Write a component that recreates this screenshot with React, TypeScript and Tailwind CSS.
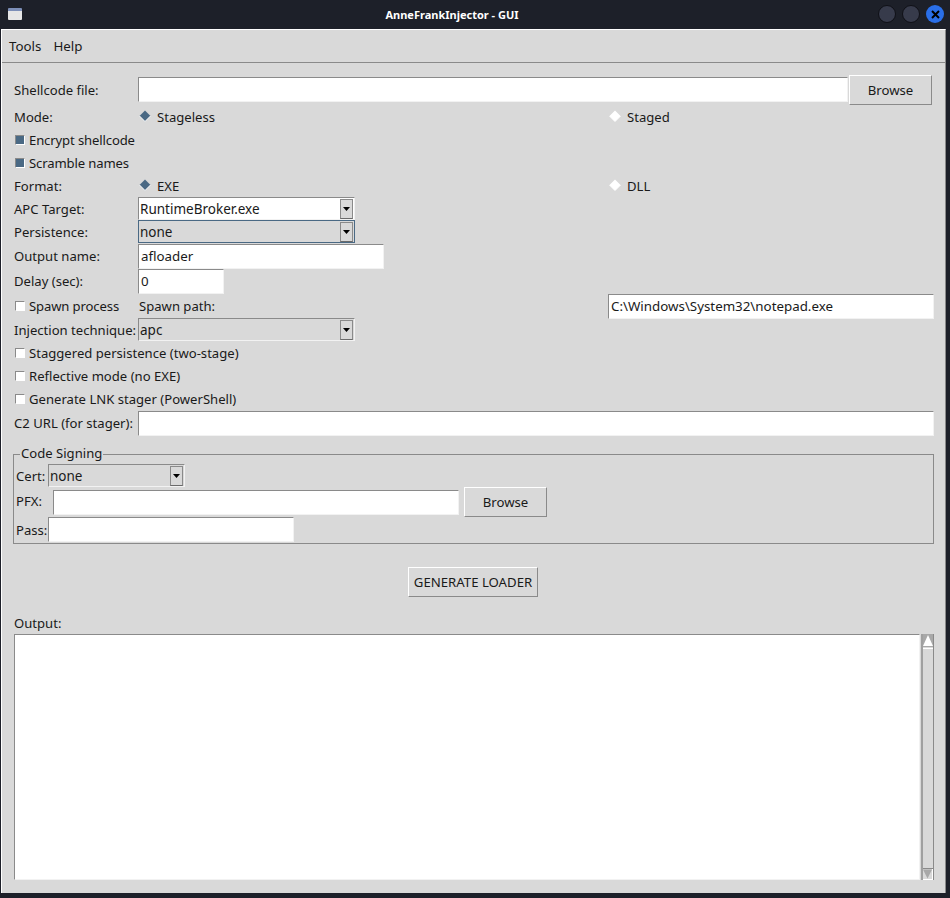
import type { ReactNode } from "react";

const sunken =
  "border-t border-l border-t-[#8a8a8a] border-l-[#8a8a8a] border-r border-b border-r-[#f2f2f2] border-b-[#f2f2f2]";
const raised =
  "border-t border-l border-t-white border-l-white border-r border-b border-r-[#8a8a8a] border-b-[#8a8a8a]";

const Entry = ({ value = "", className = "" }: { value?: string; className?: string }) => (
  <div className={`bg-white flex items-center pl-[2px] text-[13.33px] ${sunken} ${className}`}>
    {value}
  </div>
);

const Button = ({ label, className = "" }: { label: string; className?: string }) => (
  <div className={`flex items-center justify-center bg-[#d9d9d9] text-[13.2px] pt-[1px] ${raised} ${className}`}>
    {label}
  </div>
);

const Combo = ({
  value,
  readonly = false,
  focus = false,
  className = "",
}: {
  value: string;
  readonly?: boolean;
  focus?: boolean;
  className?: string;
}) => (
  <div
    className={`flex items-center justify-between self-start pl-[1px] pr-[1px] h-[23px] text-[13.5px] ${
      readonly ? "bg-[#d9d9d9]" : "bg-white"
    } ${focus ? "border border-[#4a6984]" : sunken} ${className}`}
  >
    <span className="pt-[2px]">{value}</span>
    <div className="w-[13px] h-[20px] flex items-center justify-center bg-[#d9d9d9] border border-[#8a8a8a] border-b-[#6a6a6a]">
      <svg width="7" height="4" viewBox="0 0 7 4">
        <polygon points="0,0 7,0 3.5,4" fill="#000" />
      </svg>
    </div>
  </div>
);

const Check = ({
  label,
  checked = false,
  tight = false,
}: {
  label: string;
  checked?: boolean;
  tight?: boolean;
}) => (
  <div className="flex items-center h-full">
    <div
      className={`w-[10px] h-[10px] ml-[1px] mr-[4px] -mt-[2px] border-t border-l border-t-[#8a8a8a] border-l-[#8a8a8a] border-r border-b border-r-white border-b-white ${
        checked ? "bg-[#4a6984]" : "bg-white"
      }`}
    />
    <span className={tight ? "tracking-[-0.13px]" : ""}>{label}</span>
  </div>
);

const Radio = ({ label, checked = false }: { label: string; checked?: boolean }) => (
  <div className="flex items-center h-full pl-[1px]">
    <svg width="12" height="12" viewBox="0 0 12 12" className="mr-[6px] -mt-[2px]">
      <polygon points="6,0.5 11.5,6 6,11.5 0.5,6" fill={checked ? "#4a6984" : "#fff"} />
      <polyline points="0.5,6 6,11.5 11.5,6" fill="none" stroke="#fff" strokeWidth="1" />
    </svg>
    <span className="pt-[2px]">{label}</span>
  </div>
);

const Row = ({
  h,
  a,
  b,
  c,
  shift = false,
}: {
  h: string;
  a?: ReactNode;
  b?: ReactNode;
  c?: ReactNode;
  shift?: boolean;
}) => (
  <div className={`grid grid-cols-[124px_470px_326px] items-center ${h}`}>
    <div className={`h-full flex items-center whitespace-nowrap ${shift ? "pt-[2px]" : ""}`}>{a}</div>
    <div className="h-full flex items-center">{b}</div>
    <div className="h-full flex items-center">{c}</div>
  </div>
);

export default function App() {
  return (
    <div
      className="w-[950px] h-[898px] bg-[#1d2029] overflow-hidden text-[13.1px] leading-none text-[#1a1a1a]"
      style={{ fontFamily: '"Noto Sans", sans-serif' }}
    >
      {/* title bar */}
      <div className="h-[29px] flex items-center relative">
        <div className="ml-[8px] -mt-[2px] w-[14px] h-[12px] bg-[#e6e6e6] border-t-[3px] border-t-[#7d8fb8] rounded-[1px]" />
        <div className="absolute left-0 w-[904px] text-center text-white font-bold text-[11px]">
          AnneFrankInjector - GUI
        </div>
        <div className="ml-auto mr-[6px] flex items-center gap-[6px] -mt-[1px]">
          <div className="w-[18px] h-[18px] rounded-full bg-[#373b4b] border border-[#0f1016]" />
          <div className="w-[18px] h-[18px] rounded-full bg-[#373b4b] border border-[#0f1016]" />
          <div className="w-[18px] h-[18px] rounded-full bg-[#2a6fe8] flex items-center justify-center">
            <svg width="9" height="9" viewBox="0 0 9 9">
              <path d="M1 1 L8 8 M8 1 L1 8" stroke="#000" strokeWidth="2" />
            </svg>
          </div>
        </div>
      </div>

      {/* window */}
      <div className="ml-[1px] w-[945px] h-[864px] bg-[#d9d9d9] border-t border-l border-t-white border-l-white border-r border-r-[#8a8a8a]">
        {/* menu */}
        <div className="h-[33px] flex items-center gap-[12px] pl-[7px] pt-[2px] text-[13.33px] border-b border-b-[#8a8a8a]">
          <span>Tools</span>
          <span>Help</span>
        </div>

        <div className="pl-[12px] pt-[12px]">
          <div className="grid grid-cols-[124px_711px_83px] h-[30px] items-center">
            <span className="pt-[2px]">Shellcode file:</span>
            <Entry className="h-[25px] self-start mt-[2px] mr-[1px]" />
            <Button label="Browse" className="h-[30px]" />
          </div>
          <Row h="h-[24px]" shift a="Mode:" b={<Radio label="Stageless" checked />} c={<Radio label="Staged" />} />
          <Row h="h-[23px]" a={<Check label="Encrypt shellcode" checked tight />} />
          <Row h="h-[23px]" a={<Check label="Scramble names" checked tight />} />
          <Row h="h-[22px]" shift a="Format:" b={<Radio label="EXE" checked />} c={<Radio label="DLL" />} />
          <Row h="h-[23px]" shift a="APC Target:" b={<Combo value="RuntimeBroker.exe" className="w-[217px]" />} />
          <Row h="h-[24px]" shift a="Persistence:" b={<Combo value="none" readonly focus className="w-[217px]" />} />
          <Row h="h-[25px]" a="Output name:" b={<Entry value="afloader" className="w-[246px] h-[25px]" />} />
          <Row h="h-[25px]" a="Delay (sec):" b={<Entry value="0" className="w-[86px] h-[25px]" />} />
          <Row
            h="h-[24px]"
            a={<Check label="Spawn process" tight />}
            b={<span className="pl-[1px]">Spawn path:</span>}
            c={<Entry value="C:\Windows\System32\notepad.exe" className="w-[326px] h-[25px]" />}
          />
          <Row h="h-[24px]" shift a="Injection technique:" b={<Combo value="apc" readonly className="w-[217px]" />} />
          <Row h="h-[23px]" a={<Check label="Staggered persistence (two-stage)" />} />
          <Row h="h-[23px]" a={<Check label="Reflective mode (no EXE)" />} />
          <Row h="h-[23px]" a={<Check label="Generate LNK stager (PowerShell)" />} />
          <div className="grid grid-cols-[124px_796px] h-[25px] items-center">
            <span>C2 URL (for stager):</span>
            <Entry className="h-[25px]" />
          </div>

          {/* code signing */}
          <div className="relative mt-[18px] -ml-[1px] w-[921px] h-[90px] border border-[#8a8a8a] pl-[2px] pt-[9px]">
            <div className="absolute left-[6px] -top-[8px] bg-[#d9d9d9] px-[1px]">Code Signing</div>
            <div className="flex items-center h-[23px]">
              <span className="w-[32px] pt-[2px]">Cert:</span>
              <Combo value="none" readonly className="w-[137px]" />
            </div>
            <div className="flex items-center h-[30px]">
              <span className="w-[37px]">PFX:</span>
              <Entry className="w-[406px] h-[25px]" />
              <Button label="Browse" className="ml-[5px] w-[83px] h-[30px]" />
            </div>
            <div className="flex items-center h-[25px]">
              <span className="w-[32px] pt-[2px]">Pass:</span>
              <Entry className="w-[246px] h-[25px]" />
            </div>
          </div>

          <div className="flex justify-center w-[918px] mt-[23px]">
            <Button label="GENERATE LOADER" className="w-[130px] h-[30px]" />
          </div>

          <div className="mt-[17px] h-[19px] flex items-center">Output:</div>
          <div className="flex h-[246px] mt-[1px]">
            <div className={`w-[906px] bg-white ${sunken}`} />
            <div className="w-[13px] ml-[1px] h-full flex flex-col border-l-2 border-l-[#a0a0a0] border-r border-r-[#8a8a8a]">
              <div className="h-[13px] bg-[#a8a8a8] flex items-center justify-center">
                <svg width="10" height="11" viewBox="0 0 10 11">
                  <polygon points="5,0 10,11 0,11" fill="#fff" />
                </svg>
              </div>
              <div className="flex-1 border-t border-b border-t-white border-b-[#8a8a8a] mt-[1px]" />
              <div className="h-[11px] border-r border-b border-r-white border-b-white flex items-center justify-center">
                <svg width="10" height="10" viewBox="0 0 10 10">
                  <polygon points="0,0 10,0 5,10" fill="#a8a8a8" />
                </svg>
              </div>
            </div>
          </div>
        </div>
      </div>
    </div>
  );
}
